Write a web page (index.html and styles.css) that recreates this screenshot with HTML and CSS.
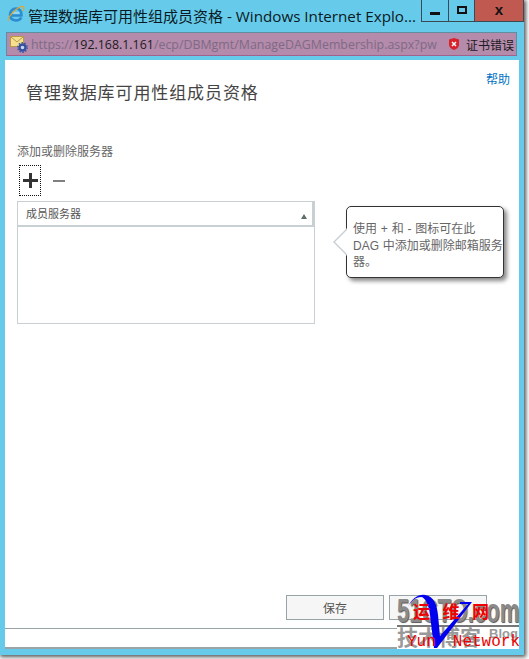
FILE: index.html
```html
<!DOCTYPE html>
<html lang="zh-CN">
<head>
    <meta charset="UTF-8">
    <meta name="viewport" content="width=device-width, initial-scale=1.0">
    <title>管理数据库可用性组成员资格</title>
    <link rel="stylesheet" href="styles.css">
</head>
<body>
    <div class="window">
        <div class="titlebar">
            <svg class="ie-icon" width="18" height="18" viewBox="0 0 18 18">
                <path d="M3.500 10.500H14.500C15 6.500 12.500 3.500 9 3.500 5.500 3.500 3 6.500 3 10c0 3.500 2.500 5.500 6 5.500 2.500 0 4.300-1 5.200-3" fill="none" stroke="#2c8ccf" stroke-width="2.600"/>
                <path d="M6 8h6" stroke="#bfe3f5" stroke-width="1"/>
                <path d="M1.500 16C0 13 8 3.500 14.500 1.500c2.500-.5 3 1.500 1.500 4.500" fill="none" stroke="#e3a52a" stroke-width="1.200"/>
            </svg>
            <span class="title-text">管理数据库可用性组成员资格<span class="title-latin"> - Windows Internet Explo...</span></span>
            <div class="win-btns">
                <div class="win-btn"><span class="glyph-min"></span></div>
                <div class="win-btn win-btn-max"><span class="glyph-max"></span></div>
                <div class="win-btn win-btn-close">x</div>
            </div>
        </div>
        <div class="addressbar">
            <svg class="site-icon" width="19" height="18" viewBox="0 0 19 18">
                <rect x="0.500" y="1.500" width="13" height="10" fill="#f5e08e" stroke="#b79a4a"/>
                <path d="M1 2l6 5 6-5" fill="none" stroke="#b79a4a"/>
                <circle cx="12.500" cy="12.500" r="3" fill="#c8d4ee" stroke="#34509f" stroke-width="2.400"/>
                <circle cx="12.500" cy="12.500" r="4.800" fill="none" stroke="#34509f" stroke-width="1.200" stroke-dasharray="1.500 1.500"/>
            </svg>
            <div class="url"><span class="url-dim">https://</span><span class="url-host">192.168.1.161</span><span class="url-dim">/ecp/DBMgmt/ManageDAGMembership.aspx?pw</span></div>
            <svg class="cert-icon" width="12" height="14" viewBox="0 0 12 14">
                <path d="M6 1l5 1.500v5c0 3-2.500 4.500-5 5.500-2.500-1-5-2.500-5-5.500v-5z" fill="#d8232a"/>
                <path d="M4 5l4 4M8 5l-4 4" stroke="#fff" stroke-width="1.500"/>
            </svg>
            <span class="cert-text">证书错误</span>
        </div>
        <div class="page">
            <div class="main">
                <a class="help" href="#">帮助</a>
                <h1 class="page-title">管理数据库可用性组成员资格</h1>
                <div class="section-label">添加或删除服务器</div>
                <div class="toolbar">
                    <div class="tool-add"><span class="plus"></span></div>
                    <span class="minus"></span>
                </div>
                <div class="list-row">
                    <div class="member-list">
                        <div class="list-head">
                            <span>成员服务器</span>
                            <span class="sort-arrow"></span>
                        </div>
                    </div>
                    <div class="callout">
                        使用 + 和 - 图标可在此<br>DAG 中添加或删除邮箱服务<br>器。
                    </div>
                </div>
                <div class="actions">
                    <button class="btn">保存</button>
                    <button class="btn"></button>
                </div>
            </div>
            <div class="statusbar"></div>
            <div class="watermark">
                <div class="wm-site">51CTO.com</div>
                <div class="wm-blog"><span>技术博客</span><span class="wm-blog-en">Blog</span></div>
                <svg class="wm-v" width="125" height="62" viewBox="0 0 125 62">
                    <path d="M11 20C15 11 22 7 28 8 37 9 40 18 41 28L43 49 71 17H63V15H75L40 61H37L33 28C32 18 28 10 24 10 19 10 14 14 11 20Z" fill="#0000ee"/>
                </svg>
                <div class="wm-red-top"><span>运</span><span>维</span><span>网</span></div>
                <div class="wm-red-bottom"><span>Yun</span><span>Network</span></div>
            </div>
        </div>
    </div>
</body>
</html>
```

FILE: styles.css
```css
html, body {
    margin: 0;
    padding: 0;
    height: 100%;
    overflow: hidden;
    background-color: #fff;
}
.window {
    box-sizing: border-box;
    width: 524px;
    height: 655px;
    background-color: #66cbea;
    padding: 0 5px 6px 5px;
    display: flex;
    flex-direction: column;
    box-shadow: 1px 1px 4px 1px #555;
    font-family: "Liberation Sans", "Noto Sans CJK SC", sans-serif;
}
.titlebar {
    height: 28px;
    display: flex;
    align-items: center;
    position: relative;
    padding-left: 2px;
    flex-shrink: 0;
}
.ie-icon {
    margin-right: 3px;
}
.title-text {
    font-family: "Open Sans", "Noto Sans CJK SC", sans-serif;
    font-size: 15px;
    white-space: nowrap;
    color: #0b1a24;
    padding-top: 2px;
}
.title-latin {
    font-size: 15.200px;
}
.win-btns {
    position: absolute;
    top: 0;
    right: -5px;
    display: flex;
    height: 21px;
    border: 1px solid #3a4a52;
    border-top: none;
}
.win-btn {
    width: 26px;
    height: 21px;
    display: flex;
    align-items: center;
    justify-content: center;
    border-right: 1px solid #3a4a52;
}
.win-btn-max {
    width: 25px;
}
.win-btn-close {
    width: 48px;
    border-right: none;
    background-color: #c05a50;
    font-weight: bold;
    font-size: 15px;
    color: #111;
    padding-bottom: 3px;
    box-sizing: border-box;
}
.glyph-min {
    width: 10px;
    height: 3px;
    margin-top: 6px;
    background-color: #111;
}
.glyph-max {
    box-sizing: border-box;
    width: 10px;
    height: 8px;
    margin-top: -2px;
    border: 2px solid #111;
}
.addressbar {
    box-sizing: border-box;
    height: 24px;
    margin: 4px 2px 4px 1px;
    border: 1px solid #5f8f9e;
    border-bottom-color: #a0628c;
    background-color: #b48bab;
    display: flex;
    align-items: center;
    flex-shrink: 0;
    padding: 0 2px 0 3px;
}
.site-icon {
    flex-shrink: 0;
    margin-right: 2px;
}
.url {
    font-family: "Open Sans", sans-serif;
    font-size: 12.400px;
    width: 409px;
    overflow: hidden;
    white-space: nowrap;
    flex-shrink: 0;
}
.url-dim {
    color: #7d6a85;
}
.url-host {
    color: #1d1a22;
}
.cert-icon {
    margin: 0 6px 0 8px;
    flex-shrink: 0;
}
.cert-text {
    font-size: 12px;
    color: #1d1a22;
    white-space: nowrap;
}
.page {
    flex: 1;
    background-color: #fff;
    display: flex;
    flex-direction: column;
    position: relative;
}
.main {
    flex: 1;
    display: flex;
    flex-direction: column;
    position: relative;
    padding: 0 0 0 12px;
}
.help {
    position: absolute;
    top: 10px;
    right: 9px;
    font-size: 12px;
    color: #0072c6;
    text-decoration: none;
}
.page-title {
    font-size: 17px;
    font-weight: normal;
    color: #444;
    letter-spacing: 0.900px;
    margin: 22px 0 0 9px;
    line-height: 24px;
}
.section-label {
    font-size: 12px;
    color: #666;
    margin-top: 38px;
    line-height: 16px;
}
.toolbar {
    display: flex;
    align-items: center;
    margin: 5px 0 0 2px;
    height: 31px;
}
.tool-add {
    box-sizing: border-box;
    width: 22px;
    height: 31px;
    border: 1px dotted #111;
    display: flex;
    align-items: center;
    justify-content: center;
    margin-right: 12px;
}
.plus {
    width: 15px;
    height: 15px;
    background:
        linear-gradient(#333, #333) center / 15px 3px no-repeat,
        linear-gradient(#333, #333) center / 3px 15px no-repeat;
}
.minus {
    width: 12px;
    height: 2px;
    background-color: #808080;
}
.list-row {
    display: flex;
    align-items: flex-start;
    margin-top: 5px;
}
.member-list {
    box-sizing: border-box;
    width: 298px;
    height: 123px;
    border: 1px solid #c8d0d4;
}
.list-head {
    box-sizing: border-box;
    height: 25px;
    border-bottom: 2px solid #c8d0d4;
    border-right: 2px solid #c8d0d4;
    font-size: 11px;
    color: #555;
    display: flex;
    align-items: center;
    justify-content: space-between;
    padding: 0 5px 2px 8px;
}
.sort-arrow {
    margin-top: 7px;
    border-left: 3.500px solid transparent;
    border-right: 3.500px solid transparent;
    border-bottom: 5px solid #5f6e66;
}
.callout {
    box-sizing: border-box;
    width: 158px;
    height: 72px;
    margin: 5px 0 0 31px;
    padding: 14px 0 0 6px;
    background-color: #fff;
    border: 1px solid #333;
    border-radius: 5px;
    box-shadow: 3px 3px 4px #888;
    font-size: 12px;
    line-height: 16.500px;
    word-spacing: 0.500px;
    white-space: nowrap;
    color: #666;
    position: relative;
}
/* arrow on the left side, grey triangle with a white one on top */
.callout::before,
.callout::after {
    content: "";
    position: absolute;
    top: 21px;
    border-top: 14px solid transparent;
    border-bottom: 14px solid transparent;
}
.callout::before {
    left: -14px;
    border-right: 14px solid #c8d0d4;
}
.callout::after {
    left: -12px;
    border-right: 14px solid #fff;
}
.actions {
    margin-top: auto;
    display: flex;
    justify-content: flex-end;
    gap: 5px;
    padding: 0 32px 8px 0;
}
.btn {
    width: 98px;
    height: 25px;
    background-color: #f6f6f6;
    border: 1px solid #98a4a8;
    font-family: inherit;
    font-size: 12px;
    color: #555;
    padding: 0;
}
.statusbar {
    height: 18px;
    border-top: 1px solid #98a4a8;
    border-bottom: 2px solid #98a4a8;
    flex-shrink: 0;
}
.watermark {
    position: absolute;
    right: 0;
    bottom: 0;
    width: 122px;
    height: 62px;
}
.wm-site {
    font-weight: bold;
    font-size: 33px;
    line-height: 30px;
    color: #8a8a8a;
    text-shadow: 1px 1px 1px #555;
    white-space: nowrap;
    position: absolute;
    left: 0;
    top: 9px;
    transform: scaleX(0.670);
    transform-origin: left top;
}
.wm-blog {
    position: absolute;
    left: 0;
    top: 38px;
    width: 122px;
    height: 24px;
    box-sizing: border-box;
    background-color: #fff;
    border-top: 2px solid #777;
    display: flex;
    justify-content: space-between;
    font-size: 21px;
    line-height: 22px;
    font-weight: bold;
    color: #999;
}
.wm-blog-en {
    font-size: 13px;
    line-height: 14px;
    padding-right: 1px;
}
.wm-v {
    position: absolute;
    left: 0;
    top: 0;
}
.wm-red-top {
    position: absolute;
    left: 16px;
    top: 16px;
    display: flex;
    gap: 12.500px;
    font-size: 17px;
    line-height: 20px;
    font-weight: bold;
    color: #ee0000;
}
.wm-red-bottom {
    position: absolute;
    left: 10px;
    top: 48px;
    font-family: "Liberation Mono", monospace;
    font-size: 16px;
    line-height: 14px;
    color: #ee0000;
    display: flex;
    gap: 17px;
}
```
